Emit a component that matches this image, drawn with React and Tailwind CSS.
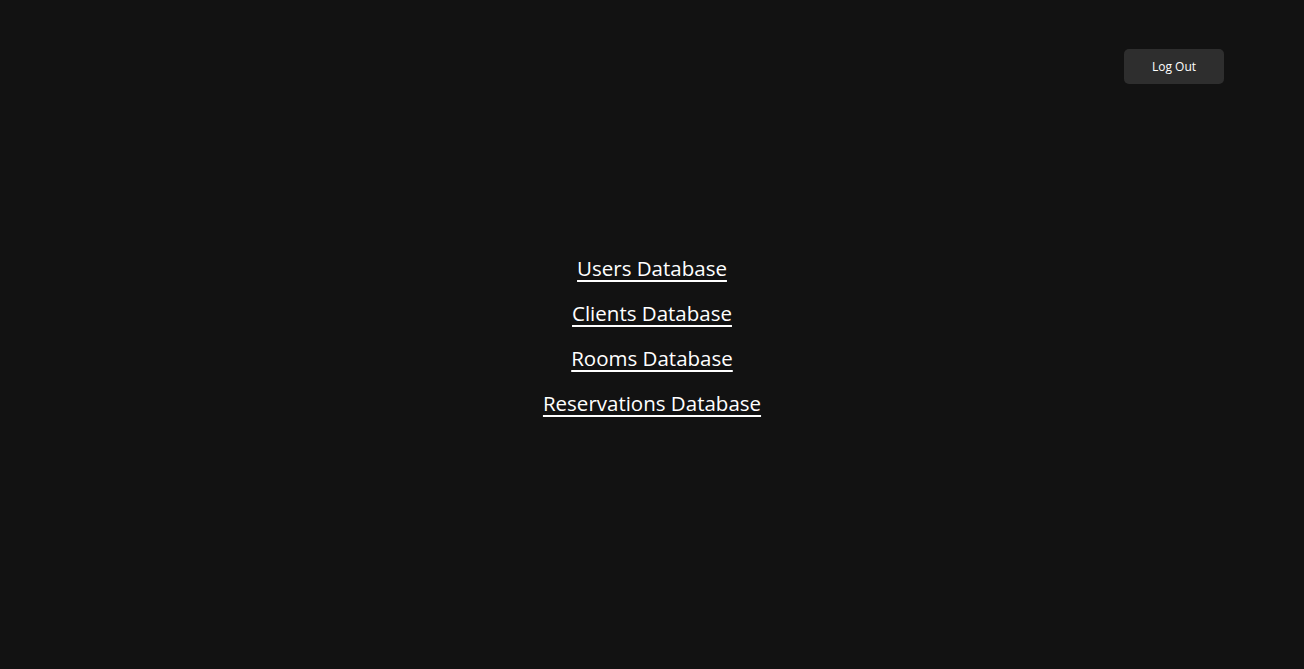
const LINKS = ['Users Database', 'Clients Database', 'Rooms Database', 'Reservations Database'];

export default function App() {
  return (
    <div className="grid grid-rows-[1fr_auto_1fr] h-screen w-full bg-[#121212] text-white font-['Open_Sans',sans-serif]">
      {/* Top bar */}
      <div className="flex justify-end items-start pt-[49px] pr-[80px]">
        <button className="w-[100px] h-[35px] pt-px rounded-[5px] bg-[#2e2e2e] text-[12px] text-white">
          Log Out
        </button>
      </div>

      {/* Links */}
      <div className="flex flex-col items-center gap-[15px] pt-[2px]">
        {LINKS.map((label) => (
          <a key={label} href="#" className="text-[20.5px] leading-[30px] underline underline-offset-[4px]">
            {label}
          </a>
        ))}
      </div>

      <div />
    </div>
  );
}
